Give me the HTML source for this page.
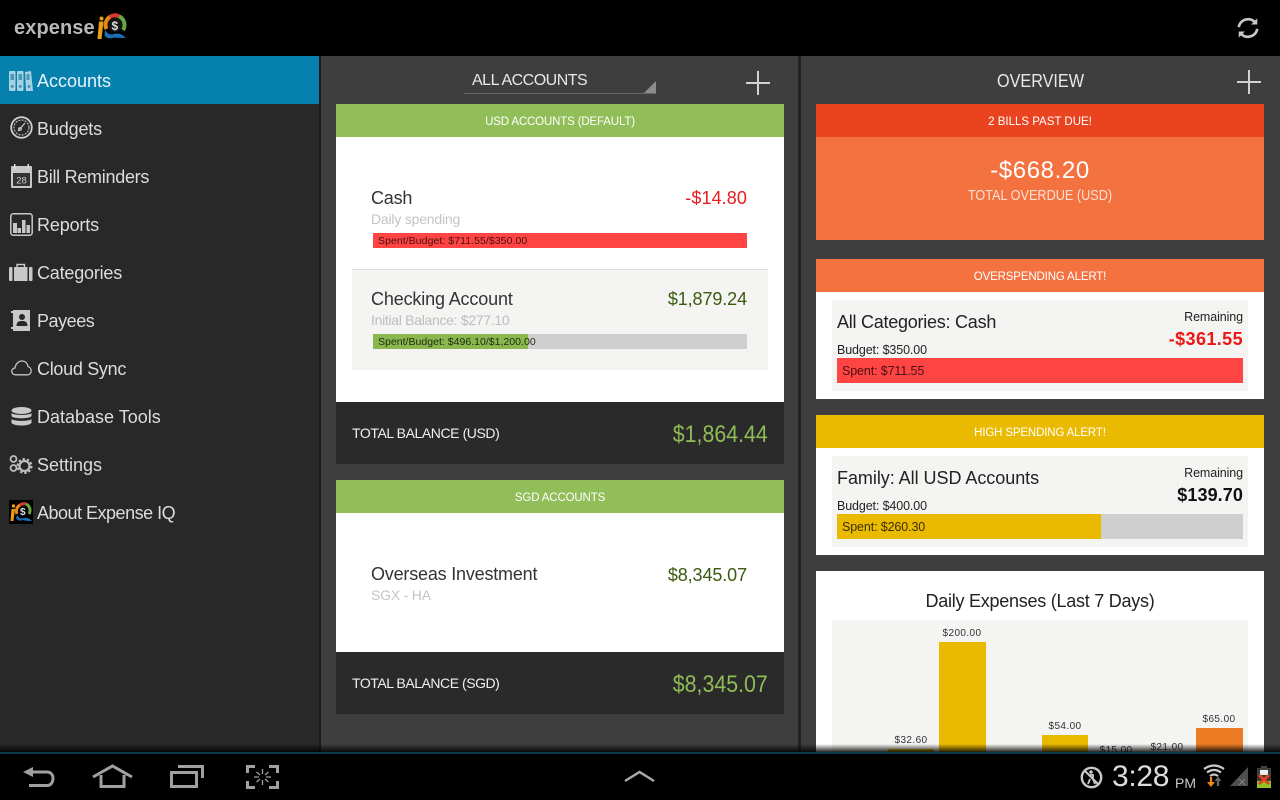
<!DOCTYPE html>
<html><head><meta charset="utf-8"><title>Expense IQ</title>
<style>
html,body{margin:0;padding:0;width:1280px;height:800px;overflow:hidden;background:#000}
body{position:relative;font-family:"Liberation Sans",sans-serif}
.b{position:absolute}
.t{position:absolute;white-space:nowrap;line-height:1}
.r{text-align:right}
.c{text-align:center}
.nav{font-size:18px;color:#dcdcdc;left:37px}
.hd{font-size:11.500px;color:#fff;text-align:center;letter-spacing:-.15px}
.lb{font-size:10px;color:#333;text-align:center;letter-spacing:.4px;width:60px}
svg{position:absolute;overflow:visible}
</style></head><body>
<!-- panels -->
<div class="b" style="left:0;top:56px;width:319px;height:697px;background:#282828"></div>
<div class="b" style="left:319px;top:56px;width:2px;height:697px;background:#1c1c1c"></div>
<div class="b" style="left:321px;top:56px;width:477px;height:697px;background:#3e3e3e"></div>
<div class="b" style="left:798px;top:56px;width:3px;height:697px;background:#222"></div>
<div class="b" style="left:801px;top:56px;width:479px;height:697px;background:#3e3e3e"></div>
<div class="b" style="left:0;top:56px;width:319px;height:48px;background:#0681ad"></div>

<!-- top bar -->
<div class="t" style="left:14px;top:18px;font-size:20px;font-weight:bold;color:#b8b8b8;letter-spacing:.1px">expense</div>
<svg style="left:96px;top:12px" width="32" height="30" viewBox="0 0 32 30">
<path d="M3 9.500h4.500L5.500 27H1.500z" fill="#e8a010"/><circle cx="5.500" cy="6.500" r="2" fill="#e8a010"/>
<circle cx="19" cy="13" r="7" fill="#151515"/>
<path d="M10.500 17A9.500 9.500 0 0 1 14 4.800" fill="none" stroke="#e8861a" stroke-width="4"/>
<path d="M14 4.800A9.500 9.500 0 0 1 23 4.300" fill="none" stroke="#d8392a" stroke-width="4"/>
<path d="M23 4.300A9.500 9.500 0 0 1 27 18" fill="none" stroke="#67a83e" stroke-width="4"/>
<path d="M9 18Q13 24 18 22Q24 20 30 26Q23 26 18 25.500Q11 28 8.500 23z" fill="#1d6fb5"/>
<text x="15.500" y="18" font-size="12" font-weight="bold" font-family="Liberation Sans" fill="#ddd">$</text>
</svg>
<svg style="left:1237px;top:17px" width="22" height="22" viewBox="0 0 25 24" fill="none" stroke="#c8c8c8" stroke-width="3">
<path d="M2 11C3 5 8 2 13 2C16 2 18 3 20 5"/><path d="M23 13C22 19 17 22 12 22C9 22 7 21 5 19"/>
<path d="M16 8L23 1V8z" fill="#c8c8c8" stroke="none"/><path d="M9 16L2 23V16z" fill="#c8c8c8" stroke="none"/>
</svg>

<!-- nav -->
<div class="t nav" style="top:72px;color:#e6f3f8">Accounts</div>
<div class="t nav" style="top:120px;letter-spacing:-.15px">Budgets</div>
<div class="t nav" style="top:168px;letter-spacing:-.28px">Bill Reminders</div>
<div class="t nav" style="top:216px;letter-spacing:-.15px">Reports</div>
<div class="t nav" style="top:264px;letter-spacing:-.2px">Categories</div>
<div class="t nav" style="top:312px;letter-spacing:-.45px">Payees</div>
<div class="t nav" style="top:360px;letter-spacing:-.3px">Cloud Sync</div>
<div class="t nav" style="top:408px">Database Tools</div>
<div class="t nav" style="top:456px">Settings</div>
<div class="t nav" style="top:504px;letter-spacing:-.5px">About Expense IQ</div>

<!-- nav icons -->
<svg style="left:9px;top:70px" width="24" height="21" viewBox="0 0 24 21">
<g fill="#a5d2e3"><rect x="0" y="1" width="6.500" height="20" rx="1"/><rect x="8" y="1" width="6.500" height="20" rx="1"/><path d="M16 2l6-1 2 20h-7z"/></g>
<g fill="#4d96b5"><rect x="1.500" y="4" width="3.500" height="6"/><rect x="9.500" y="4" width="3.500" height="6"/><rect x="17.500" y="4" width="3" height="6"/><circle cx="3.200" cy="16.500" r="1.500"/><circle cx="11.200" cy="16.500" r="1.500"/><circle cx="20" cy="16.500" r="1.500"/></g>
</svg>
<svg style="left:10px;top:116px" width="23" height="23" viewBox="0 0 23 23" fill="none" stroke="#cfcfcf">
<circle cx="11.500" cy="11.500" r="10.300" stroke-width="1.800"/><circle cx="11.500" cy="11.500" r="7.500" stroke-width="1" stroke-dasharray="2 1.200"/>
<path d="M8 15L15 7" stroke-width="1.200"/><circle cx="10" cy="13" r="1.400" stroke-width="1"/>
</svg>
<svg style="left:11px;top:164px" width="21" height="24" viewBox="0 0 21 24">
<rect x="0" y="2" width="21" height="22" rx="1" fill="#c8c8c8"/><rect x="2" y="9" width="17" height="13" fill="#333"/>
<rect x="3" y="0" width="1.500" height="5" fill="#ddd"/><rect x="16.500" y="0" width="1.500" height="5" fill="#ddd"/>
<text x="10.500" y="19.500" text-anchor="middle" font-size="9.500" font-family="Liberation Sans" fill="#ccc">28</text>
</svg>
<svg style="left:10px;top:213px" width="23" height="23" viewBox="0 0 23 23">
<rect x=".8" y=".8" width="21.400" height="21.400" rx="2.500" fill="none" stroke="#c8c8c8" stroke-width="1.500"/>
<g fill="#c8c8c8"><rect x="3" y="10" width="4" height="10"/><rect x="7.500" y="15" width="3.500" height="5"/><rect x="12" y="7" width="3.500" height="13"/><rect x="16.500" y="12" width="3.500" height="8"/></g>
</svg>
<svg style="left:9px;top:263px" width="24" height="19" viewBox="0 0 24 19">
<g fill="#c8c8c8"><rect x="0" y="4" width="3.500" height="14" rx="1"/><rect x="20" y="4" width="3.500" height="14" rx="1"/><rect x="5" y="4" width="13.500" height="14"/></g>
<path d="M8 4V1.500h7.500V4" fill="none" stroke="#c8c8c8" stroke-width="1.400"/>
</svg>
<svg style="left:11px;top:309px" width="20" height="23" viewBox="0 0 20 23">
<path d="M2 1h17v21H2z" fill="#c8c8c8"/><rect x="0" y="2" width="4" height="2" fill="#c8c8c8"/><rect x="0" y="18" width="4" height="2" fill="#c8c8c8"/>
<circle cx="11" cy="8" r="3" fill="#282828"/><path d="M5.500 17c0-4 2-5 5.500-5s5.500 1 5.500 5z" fill="#282828"/>
</svg>
<svg style="left:11px;top:360px" width="21" height="16" viewBox="0 0 21 16">
<path d="M4.500 14.800C2 14.800 .8 13 .8 11.300C.8 9.500 2.200 8 4 8C4.500 4 7.500 1 11 1C14.500 1 16.500 3.500 17 6.500C19 7 20.200 9 20.200 11C20.200 13 18.700 14.800 16.500 14.800z" fill="none" stroke="#c4c4c4" stroke-width="1.300"/>
</svg>
<svg style="left:11px;top:407px" width="21" height="19" viewBox="0 0 21 19" fill="#c8c8c8">
<ellipse cx="10.500" cy="3.500" rx="10" ry="3.500"/><path d="M.5 6c2 2.500 18 2.500 20 0v3c-1 3-19 3-20 0z"/><path d="M.5 12c2 2.500 18 2.500 20 0v3.500c-1 4-19 4-20 0z"/>
</svg>
<svg style="left:9px;top:454px" width="24" height="21" viewBox="0 0 24 21" fill="none" stroke="#bdbdbd">
<circle cx="4.500" cy="5" r="3" stroke-width="1.800"/><circle cx="4.500" cy="14" r="3" stroke-width="1.800"/>
<circle cx="15.500" cy="12" r="5" stroke-width="2.200"/><circle cx="15.500" cy="12" r="7" stroke-width="2" stroke-dasharray="2.400 2"/>
</svg>
<svg style="left:9px;top:500px" width="24" height="24" viewBox="0 0 24 24">
<rect width="24" height="24" rx="1.500" fill="#000"/>
<path d="M2.500 9h3.500L4.500 21H1.500z" fill="#e8a010"/><circle cx="4.500" cy="6" r="1.700" fill="#e8a010"/>
<path d="M8 14A7 7 0 0 1 11 5" fill="none" stroke="#e8861a" stroke-width="3"/><path d="M11 5A7 7 0 0 1 17 4" fill="none" stroke="#d8392a" stroke-width="3"/><path d="M17 4A7 7 0 0 1 20 14" fill="none" stroke="#67a83e" stroke-width="3"/>
<path d="M8 15Q11 20 15 18Q19 17 23 21Q17 21 14 20Q9 22 7 18z" fill="#1d6fb5"/>
<text x="11" y="15" font-size="10" font-weight="bold" font-family="Liberation Sans" fill="#ddd">$</text>
</svg>

<!-- center -->
<div class="t" style="left:472px;top:73px;font-size:16px;color:#e8e8e8;letter-spacing:-.5px">ALL ACCOUNTS</div>
<div class="b" style="left:464px;top:93px;width:192px;height:1px;background:#666"></div>
<svg style="left:644px;top:81px" width="12" height="12"><path d="M12 0V12H0z" fill="#8c8c8c"/></svg>
<svg style="left:746px;top:71px" width="24" height="24"><path d="M12 0V24M0 12H24" stroke="#d2d2d2" stroke-width="2"/></svg>

<div class="b" style="left:336px;top:104px;width:448px;height:33px;background:#91be59"></div>
<div class="t hd" style="left:336px;top:117px;width:448px">USD ACCOUNTS (DEFAULT)</div>
<div class="b" style="left:336px;top:137px;width:448px;height:265px;background:#fff"></div>
<div class="t" style="left:371px;top:189px;font-size:18px;color:#333;letter-spacing:-.2px">Cash</div>
<div class="t" style="left:371px;top:212px;font-size:14px;color:#c4c4c4;letter-spacing:-.2px">Daily spending</div>
<div class="t r" style="right:533px;top:189px;font-size:18px;color:#e81c1c;letter-spacing:.1px">-$14.80</div>
<div class="b" style="left:373px;top:233px;width:374px;height:15px;background:#ff4444"></div>
<div class="t" style="left:378px;top:236px;font-size:10.500px;color:#4a1010;letter-spacing:.06px">Spent/Budget: $711.55/$350.00</div>

<div class="b" style="left:352px;top:269px;width:416px;height:101px;background:#f4f4f2;border-top:1px solid #dcdcdc;box-sizing:border-box"></div>
<div class="t" style="left:371px;top:290px;font-size:18px;color:#333;letter-spacing:-.15px">Checking Account</div>
<div class="t" style="left:371px;top:313px;font-size:14px;color:#bdbdbd;letter-spacing:-.3px">Initial Balance: $277.10</div>
<div class="t r" style="right:533px;top:290px;font-size:18px;color:#3a5a10;letter-spacing:-.1px">$1,879.24</div>
<div class="b" style="left:373px;top:334px;width:374px;height:15px;background:#cfcfcf"></div>
<div class="b" style="left:373px;top:334px;width:155px;height:15px;background:#8ab84f"></div>
<div class="t" style="left:378px;top:337px;font-size:10.500px;color:#1d2a10;letter-spacing:.02px">Spent/Budget: $496.10/$1,200.00</div>

<div class="b" style="left:336px;top:402px;width:448px;height:62px;background:#2a2a2a"></div>
<div class="t" style="left:352px;top:426px;font-size:14px;color:#f0f0f0;letter-spacing:-.42px">TOTAL BALANCE (USD)</div>
<div class="t r" style="right:512px;top:423px;font-size:24px;color:#8fbc56;transform:scaleX(.89);transform-origin:right">$1,864.44</div>

<div class="b" style="left:336px;top:480px;width:448px;height:33px;background:#91be59"></div>
<div class="t hd" style="left:336px;top:493px;width:448px">SGD ACCOUNTS</div>
<div class="b" style="left:336px;top:513px;width:448px;height:139px;background:#fff"></div>
<div class="t" style="left:371px;top:565px;font-size:18px;color:#333;letter-spacing:-.2px">Overseas Investment</div>
<div class="t" style="left:371px;top:588px;font-size:14px;color:#c4c4c4;letter-spacing:-.2px">SGX - HA</div>
<div class="t r" style="right:533px;top:566px;font-size:18px;color:#3a5a10;letter-spacing:-.1px">$8,345.07</div>
<div class="b" style="left:336px;top:652px;width:448px;height:62px;background:#2a2a2a"></div>
<div class="t" style="left:352px;top:676px;font-size:14px;color:#f0f0f0;letter-spacing:-.46px">TOTAL BALANCE (SGD)</div>
<div class="t r" style="right:512px;top:673px;font-size:24px;color:#8fbc56;transform:scaleX(.89);transform-origin:right">$8,345.07</div>

<!-- right -->
<div class="t c" style="left:801px;width:479px;top:72px;font-size:18px;color:#e8e8e8;transform:scaleX(.9)">OVERVIEW</div>
<svg style="left:1237px;top:70px" width="24" height="24"><path d="M12 0V24M0 12H24" stroke="#d2d2d2" stroke-width="2"/></svg>

<div class="b" style="left:816px;top:104px;width:448px;height:33px;background:#ea431f"></div>
<div class="t hd" style="left:816px;top:117px;width:448px;letter-spacing:0">2 BILLS PAST DUE!</div>
<div class="b" style="left:816px;top:137px;width:448px;height:103px;background:#f47140"></div>
<div class="t c" style="left:816px;width:448px;top:159px;font-size:24px;color:#fff;letter-spacing:.6px">-$668.20</div>
<div class="t c" style="left:816px;width:448px;top:189px;font-size:14.500px;color:#fde0d2;transform:scaleX(.875)">TOTAL OVERDUE (USD)</div>

<div class="b" style="left:816px;top:259px;width:448px;height:33px;background:#f47140"></div>
<div class="t hd" style="left:816px;top:272px;width:448px">OVERSPENDING ALERT!</div>
<div class="b" style="left:816px;top:292px;width:448px;height:107px;background:#fff"></div>
<div class="b" style="left:832px;top:300px;width:416px;height:91px;background:#f4f4f2"></div>
<div class="t" style="left:837px;top:313px;font-size:18px;color:#222;letter-spacing:-.25px">All Categories: Cash</div>
<div class="t r" style="right:37px;top:311px;font-size:12.500px;color:#222;letter-spacing:-.1px">Remaining</div>
<div class="t r" style="right:37px;top:330px;font-size:18px;font-weight:bold;color:#ee1515;letter-spacing:.4px">-$361.55</div>
<div class="t" style="left:837px;top:344px;font-size:12.500px;color:#222;letter-spacing:-.12px">Budget: $350.00</div>
<div class="b" style="left:837px;top:358px;width:406px;height:25px;background:#ff4444"></div>
<div class="t" style="left:842px;top:365px;font-size:12.500px;color:#4a1010;letter-spacing:-.12px">Spent: $711.55</div>

<div class="b" style="left:816px;top:415px;width:448px;height:33px;background:#eaba00"></div>
<div class="t hd" style="left:816px;top:428px;width:448px">HIGH SPENDING ALERT!</div>
<div class="b" style="left:816px;top:448px;width:448px;height:107px;background:#fff"></div>
<div class="b" style="left:832px;top:456px;width:416px;height:91px;background:#f4f4f2"></div>
<div class="t" style="left:837px;top:469px;font-size:18px;color:#222;letter-spacing:-.04px">Family: All USD Accounts</div>
<div class="t r" style="right:37px;top:467px;font-size:12.500px;color:#222;letter-spacing:-.1px">Remaining</div>
<div class="t r" style="right:37px;top:486px;font-size:18px;font-weight:bold;color:#111;letter-spacing:.1px">$139.70</div>
<div class="t" style="left:837px;top:500px;font-size:12.500px;color:#222;letter-spacing:-.12px">Budget: $400.00</div>
<div class="b" style="left:837px;top:514px;width:406px;height:25px;background:#cfcfcf"></div>
<div class="b" style="left:837px;top:514px;width:264px;height:25px;background:#eaba00"></div>
<div class="t" style="left:842px;top:521px;font-size:12.500px;color:#3c3000;letter-spacing:-.12px">Spent: $260.30</div>

<div class="b" style="left:816px;top:571px;width:448px;height:182px;background:#fff"></div>
<div class="t c" style="left:816px;width:448px;top:592px;font-size:18px;color:#222;letter-spacing:-.25px">Daily Expenses (Last 7 Days)</div>
<div class="b" style="left:832px;top:620px;width:416px;height:133px;background:#f4f4f2"></div>
<div class="b" style="left:888px;top:749px;width:46px;height:4px;background:#eaba00"></div>
<div class="b" style="left:939px;top:642px;width:47px;height:111px;background:#eaba00"></div>
<div class="b" style="left:1042px;top:735px;width:46px;height:18px;background:#eaba00"></div>
<div class="b" style="left:1196px;top:728px;width:47px;height:25px;background:#ec7c24"></div>
<div class="t lb" style="left:881px;top:736px">$32.60</div>
<div class="t lb" style="left:932px;top:629px">$200.00</div>
<div class="t lb" style="left:1035px;top:722px">$54.00</div>
<div class="t lb" style="left:1086px;top:746px">$15.00</div>
<div class="t lb" style="left:1137px;top:743px">$21.00</div>
<div class="t lb" style="left:1189px;top:715px">$65.00</div>

<!-- shadow and bottom bar -->
<div class="b" style="left:0;top:744px;width:1280px;height:8px;background:linear-gradient(rgba(0,0,0,0),rgba(0,0,0,.85))"></div>
<div class="b" style="left:0;top:752px;width:1280px;height:48px;background:#000"></div>
<div class="b" style="left:0;top:752px;width:1280px;height:2px;background:#0b3a4c"></div>

<svg style="left:22px;top:764px" width="34" height="25" viewBox="0 0 34 25" fill="none" stroke="#a0a0a0" stroke-width="3">
<path d="M9 8H25C29 8 31 11 31 14.500C31 18 29 21.500 25 21.500H7"/><path d="M1 8L11 3V13z" fill="#a0a0a0" stroke="none"/>
</svg>
<svg style="left:92px;top:764px" width="41" height="25" viewBox="0 0 41 25" fill="none" stroke="#a0a0a0" stroke-width="3">
<path d="M1 13L20.500 2L40 13"/><path d="M9 11V22.500H32V11"/>
</svg>
<svg style="left:169px;top:764px" width="37" height="25" viewBox="0 0 37 25" fill="none" stroke="#a0a0a0" stroke-width="3">
<rect x="2.500" y="8.500" width="25" height="14"/><path d="M9 2.500H33.500V14"/>
</svg>
<svg style="left:245px;top:765px" width="35" height="25" viewBox="0 0 35 25" fill="none" stroke="#a0a0a0" stroke-width="3">
<path d="M2.500 8V1.500H10M24 1.500H32.500V8M2.500 16V22.500H10M24 22.500H32.500V16"/>
<path d="M17.500 4V9M17.500 15V20M9 12H14M21 12H26M11.500 7L15 10M23.500 7L20 10M11.500 17L15 14M23.500 17L20 14" stroke-width="1.300"/>
</svg>
<svg style="left:624px;top:770px" width="31" height="13" viewBox="0 0 31 13" fill="none" stroke="#a8a8a8" stroke-width="2.500"><path d="M1 11L15.500 2L30 11"/></svg>

<svg style="left:1080px;top:766px" width="23" height="23" viewBox="0 0 23 23" fill="none" stroke="#c8c8c8">
<circle cx="11.500" cy="11.500" r="9.700" stroke-width="2.400"/><path d="M4.500 4.500L18.500 18.500" stroke-width="2"/>
<circle cx="11" cy="6" r="1.800" fill="#c8c8c8" stroke="none"/><path d="M9 9H13V13L15 18M10 13L8 18" stroke-width="1.800"/>
</svg>
<div class="t" style="left:1112px;top:762px;font-size:30px;color:#dcdcdc;letter-spacing:-.3px">3:28</div>
<div class="t" style="left:1175px;top:776px;font-size:14px;color:#c8c8c8">PM</div>
<svg style="left:1203px;top:764px" width="23" height="24" viewBox="0 0 23 24" fill="none" stroke="#c8c8c8" stroke-width="2.300">
<path d="M1 5Q11 -2 21 5M4 8.500Q11 3.500 18 8.500M7 12Q11 9 15 12"/>
<path d="M8 13V21" stroke="#e88a1a"/><path d="M4 18H12L8 23z" fill="#e88a1a" stroke="none"/>
<path d="M15 16V22" stroke="#666"/><path d="M11.500 17L15 12.500L18.500 17z" fill="#666" stroke="none"/>
</svg>
<svg style="left:1230px;top:767px" width="18" height="19" viewBox="0 0 18 19"><path d="M18 0V19H0z" fill="#4e4e4e"/><path d="M9 12L15 18M15 12L9 18" stroke="#888" stroke-width="1"/></svg>
<svg style="left:1257px;top:766px" width="14" height="22" viewBox="0 0 14 22">
<rect x="4" y="0" width="6" height="2" fill="#444"/><rect x="0" y="2" width="14" height="13" fill="#3c3c3c"/><rect x="0" y="15" width="14" height="7" fill="#90c428"/>
<rect x="3" y="4" width="8" height="5" fill="#eee"/>
<path d="M2 9L12 18M12 9L2 18" stroke="#e8401a" stroke-width="2.600"/>
</svg>
</body></html>
